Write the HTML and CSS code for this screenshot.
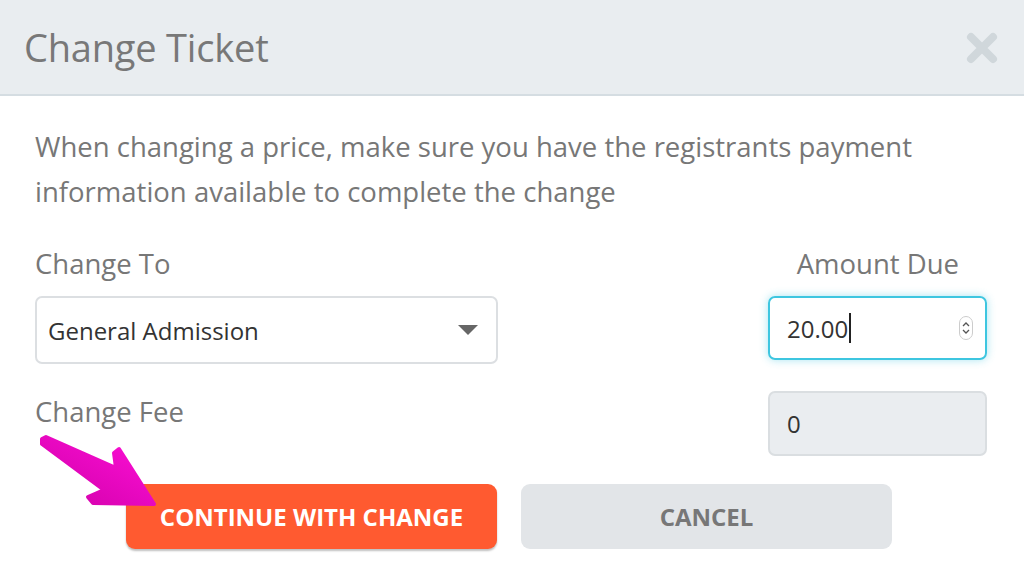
FILE: index.html
```html
<!DOCTYPE html>
<html>
<head>
<meta charset="utf-8">
<link rel="stylesheet" href="styles.css">
</head>
<body>
<div class="modal">
  <div class="header">
    <h1 class="title">Change Ticket</h1>
    <svg class="close" viewBox="0 0 32 32" width="32" height="32"><path d="M5 5 L27 27 M27 5 L5 27" stroke="#d0d7db" stroke-width="8" stroke-linecap="round"/></svg>
  </div>
  <div class="content">
    <p class="intro">When changing a price, make sure you have the registrants payment information available to complete the change</p>
    <div class="form">
      <div class="label">Change To</div>
      <div class="label right">Amount Due</div>
      <div class="select">
        <span>General Admission</span>
        <svg class="caret" width="20" height="10" viewBox="0 0 20 10"><path d="M0 0 H20 L10 10 Z" fill="#666"/></svg>
      </div>
      <div class="input focus">
        <span>20.00</span><span class="cursor"></span>
        <svg class="spin" width="14" height="24" viewBox="0 0 14 24"><rect x="0.5" y="0.5" width="13" height="23" rx="6.5" fill="#fff" stroke="#ccc"/><path d="M4 10 L7 7 L10 10 M4 14 L7 17 L10 14" fill="none" stroke="#555" stroke-width="1.3"/></svg>
      </div>
      <div class="label fee">Change Fee</div>
      <div class="input disabled"><span>0</span></div>
    </div>
    <div class="buttons">
      <div class="btn primary">CONTINUE WITH CHANGE</div>
      <div class="btn secondary">CANCEL</div>
    </div>
  </div>
  <svg class="pointer" width="170" height="90" viewBox="0 0 170 90">
    <defs>
      <linearGradient id="g" x1="1" y1="0" x2="0" y2="1">
        <stop offset="0" stop-color="#ff10d8"/>
        <stop offset="1" stop-color="#d000a8"/>
      </linearGradient>
    </defs>
    <path d="M42 19 L46 17 L116 48 L114 33 L119 29 L154 84 L93 83 L88 77 L104 70 L42 24 Z" fill="url(#g)" stroke="url(#g)" stroke-width="4" stroke-linejoin="round"/>
  </svg>
</div>
</body>
</html>
```
FILE: styles.css
```css
html, body {
  margin: 0;
  padding: 0;
  background: #fff;
}
body {
  font-family: "Open Sans", "Liberation Sans", sans-serif;
  width: 1024px;
  height: 571px;
  overflow: hidden;
}
.modal {
  position: relative;
  width: 1024px;
  height: 571px;
}
.header {
  height: 94px;
  background: #e9edf0;
  border-bottom: 2px solid #d5dde2;
  display: flex;
  align-items: center;
  justify-content: space-between;
  padding: 0 26px 0 24px;
}
.title {
  margin: 0;
  font-weight: 400;
  font-size: 38px;
  color: #787878;
  letter-spacing: -0.2px;
}
.close {
  display: block;
  margin-top: 2px;
}
.content {
  padding: 0 37px 0 35px;
}
.intro {
  margin: 28px 0 0 0;
  font-size: 27.5px;
  line-height: 45px;
  color: #777;
  width: 940px;
}
.form {
  display: grid;
  grid-template-columns: 463px 1fr 219px;
  grid-template-rows: 50px 68px 92px;
  margin-top: 32px;
}
.label {
  font-size: 27.5px;
  color: #777;
  line-height: 36px;
}
.label.right {
  grid-column: 3;
  text-align: right;
  padding-right: 28px;
  white-space: nowrap;
  justify-self: end;
}
.select {
  grid-column: 1;
  box-sizing: border-box;
  border: 2px solid #dcdfe2;
  border-radius: 7px;
  display: flex;
  align-items: center;
  justify-content: space-between;
  padding: 0 18px 0 11px;
  font-size: 24px;
  color: #333;
}
.caret { display: block; }
.input {
  grid-column: 3;
  box-sizing: border-box;
  border-radius: 7px;
  display: flex;
  align-items: center;
  padding: 0 17px;
  font-size: 24px;
  color: #333;
}
.input.focus {
  border: 2px solid #3ec6e0;
  box-shadow: 0 0 8px rgba(62, 198, 224, 0.45);
  height: 64px;
}
.cursor {
  display: inline-block;
  width: 2px;
  height: 30px;
  background: #222;
  margin-left: 1px;
}
.spin { margin-left: auto; margin-right: -5px; display: block; }
.label.fee {
  grid-column: 1;
  align-self: start;
  padding-top: 30px;
}
.input.disabled {
  grid-column: 3;
  align-self: end;
  height: 65px;
  background: #eaedf0;
  border: 2px solid #dadee1;
}
.buttons {
  display: flex;
  gap: 24px;
  margin-left: 91px;
  margin-top: 28px;
}
.btn {
  width: 371px;
  height: 65px;
  border-radius: 9px;
  display: flex;
  align-items: center;
  justify-content: center;
  font-size: 24px;
  font-weight: 700;
}
.btn.primary {
  background: #ff5a30;
  color: #fff;
  box-shadow: 0 2px 2px rgba(0,0,0,0.25);
}
.btn.secondary {
  background: #e2e5e8;
  color: #777;
}
.pointer {
  position: absolute;
  left: 0;
  top: 420px;
}
```
